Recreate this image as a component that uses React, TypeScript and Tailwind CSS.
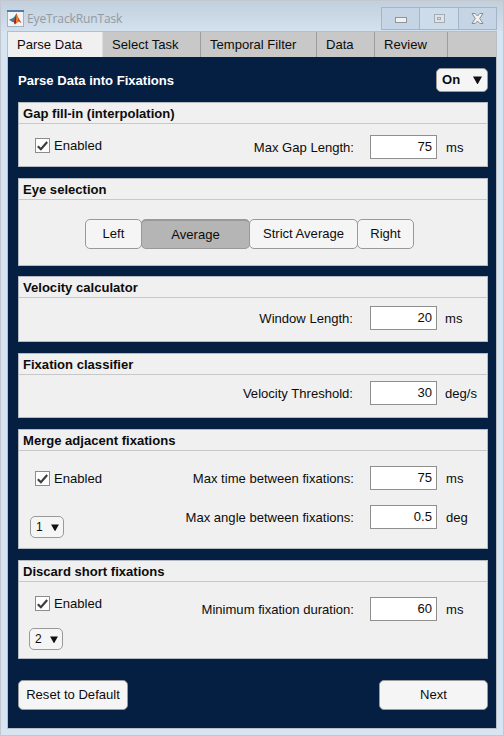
import type { ReactNode } from "react";

const Check = () => (
  <span className="flex h-[15px] w-[15px] shrink-0 items-center justify-center border border-[#8c8c8c] bg-white">
    <svg width="11" height="10" viewBox="0 0 11 10" fill="none">
      <path d="M0.8 5.2 L3.9 8.2 L10.2 1" stroke="#3c3c3c" strokeWidth="2.2" />
    </svg>
  </span>
);

const Arrow = ({ size = 9 }: { size?: number }) => (
  <svg width={size} height={size - 1} viewBox="0 0 9 8">
    <path d="M0 0.5H9L4.8 8H4.2Z" fill="#111" />
  </svg>
);

function Enabled({ top }: { top: string }) {
  return (
    <div className={`flex items-center gap-1 pl-[16px] ${top}`}>
      <Check />
      <span className="leading-[15px]">Enabled</span>
    </div>
  );
}

function Order({ value, place }: { value: string; place: string }) {
  return (
    <div
      className={`flex h-[22px] w-[34px] items-center justify-between rounded-[5px] border border-[#999] bg-[#f5f5f5] pr-1 pl-[5px] text-[12px] ${place}`}
    >
      {value}
      <Arrow size={8} />
    </div>
  );
}

function Field({ label, value, unit, near = false }: { label: string; value: string; unit: string; near?: boolean }) {
  return (
    <div className="flex h-6 items-center justify-end">
      <span className={near ? "mr-[17px] pt-[2px]" : "mr-4 pt-[2px]"}>{label}</span>
      <span className="flex h-6 w-[67px] items-center justify-end border border-[#8f8f8f] bg-white pr-1">{value}</span>
      <span className={near ? "w-[50px] pt-[2px] pl-[8px]" : "w-[50px] pt-[2px] pl-[9px]"}>{unit}</span>
    </div>
  );
}

function Panel({ title, size, children }: { title: string; size: string; children: ReactNode }) {
  return (
    <section className={`flex w-[470px] shrink-0 flex-col border border-[#b5bac1] bg-[#f0f0f0] ${size}`}>
      <h2 className="flex h-[21px] shrink-0 items-center border-b border-[#c8c8c8] pt-px pl-1 font-bold">{title}</h2>
      <div className="flex flex-1 justify-between">{children}</div>
    </section>
  );
}

function Tab({ name, look }: { name: string; look: string }) {
  return <div className={`flex h-full items-center border-r border-[#9d9d9d] ${look}`}>{name}</div>;
}

export default function App() {
  return (
    <div className="flex h-[736px] w-[504px] flex-col overflow-hidden border border-[#c3c8d0] bg-[#d7e4f2] font-['Liberation_Sans',Arial,sans-serif] text-[13.07px] leading-4 text-[#0c0c0c]">
      <header className="flex h-[30px] shrink-0 items-start justify-between bg-gradient-to-b from-[#c2cfdc] to-[#d3e0ed] pr-[6px] pl-[6px]">
        <div className="flex items-center gap-[3px] pt-[9px]">
          <svg width="17" height="17" viewBox="0 0 17 17">
            <rect x="0.5" y="0.5" width="16" height="16" fill="#f1f3f5" stroke="#9fb2c6" />
            <path d="M0 0H17V2H0Z" fill="#547ba8" />
            <path d="M2 9.8L6 8L8 6L9 4L7.6 10.5L5.4 12Z" fill="#337da6" />
            <path d="M5 12L7 10L9.3 3.3L11 7L14.5 13L11.5 11.5L8 14.5L6.5 12Z" fill="#d64d1c" />
            <path d="M9.3 3.3L10 8L8 14.5L7 12.5Z" fill="#812b25" />
            <path d="M9.5 4L10.8 8L10.5 11.5L9.2 13Z" fill="#f49b31" />
          </svg>
          <span className="font-['Open_Sans','Noto_Sans',sans-serif] text-[12px] leading-[17px] tracking-[-0.12px] text-[#929aa2]">
            EyeTrackRunTask
          </span>
        </div>
        <div className="mt-[6px] flex h-[23px] w-[116px] border border-[#a5b4c6] bg-[#c6d5e6]">
          <div className="flex w-[38px] items-center justify-center border-r border-[#a5b4c6]">
            <span className="mt-[3px] h-[6px] w-3 border border-[#8e949b] bg-[#f1f1ee]" />
          </div>
          <div className="flex w-[39px] items-center justify-center border-r border-[#a5b4c6] bg-[#cddceb]">
            <span className="flex h-[9px] w-[11px] items-center justify-center border border-[#a5abb3] bg-[#dfe3e7]">
              <span className="h-[3px] w-1 border border-[#9caab8]" />
            </span>
          </div>
          <div className="flex flex-1 items-center justify-center">
            <svg width="13" height="11" viewBox="0 0 13 11">
              <path d="M1 .5H4.2L6.5 3L8.8 .5H12L8.7 5.5L12 10.5H8.8L6.5 8L4.2 10.5H1L4.3 5.5Z" fill="#f2f1ee" stroke="#858c95" />
            </svg>
          </div>
        </div>
      </header>

      <div className="ml-[6px] flex h-[698px] w-[490px] shrink-0 flex-col border border-[#b9bec5] bg-[#051f43]">
        <nav className="flex h-[25px] shrink-0 bg-[#c8c8c8]">
          <Tab name="Parse Data" look="w-[95px] bg-[#f0f0f0] pl-[9px] border-r-[#dedede]" />
          <Tab name="Select Task" look="w-[98px] pl-[9px]" />
          <Tab name="Temporal Filter" look="w-[116px] pl-[9px]" />
          <Tab name="Data" look="w-[58px] pl-[9px]" />
          <Tab name="Review" look="w-[73px] pl-[9px]" />
        </nav>

        <main className="flex flex-1 flex-col pl-[10px]">
          <div className="flex h-[45px] w-[470px] shrink-0 items-center justify-between font-bold">
            <h1 className="pt-[2px] text-white">Parse Data into Fixations</h1>
            <div className="mt-[1px] flex h-6 w-[52px] items-center justify-between rounded-[5px] border border-[#9a9a9a] bg-[#f5f5f5] pr-[5px] pl-[5px]">
              On
              <Arrow />
            </div>
          </div>

          <Panel title="Gap fill-in (interpolation)" size="h-[65px]">
            <Enabled top="h-[43px]" />
            <div className="pt-[11px]">
              <Field label="Max Gap Length:" value="75" unit="ms" />
            </div>
          </Panel>

          <Panel title="Eye selection" size="mt-[11px] h-[88px]">
            <div className="mt-[19px] flex h-[30px] pl-[66px]">
              <div className="flex w-[57px] items-center justify-center rounded-[5px] border border-[#999] bg-[#f5f5f5]">Left</div>
              <div className="-ml-px flex w-[109px] items-center justify-center rounded-[5px] border border-t-2 border-[#999] bg-[#b5b5b5]">Average</div>
              <div className="-ml-px flex w-[109px] items-center justify-center rounded-[5px] border border-[#999] bg-[#f5f5f5]">Strict Average</div>
              <div className="-ml-px flex w-[57px] items-center justify-center rounded-[5px] border border-[#999] bg-[#f5f5f5]">Right</div>
            </div>
          </Panel>

          <Panel title="Velocity calculator" size="mt-[10px] h-[66px]">
            <div className="flex-1 pt-[8px]">
              <Field label="Window Length:" value="20" unit="ms" near />
            </div>
          </Panel>

          <Panel title="Fixation classifier" size="mt-[11px] h-[65px]">
            <div className="flex-1 pt-[6px]">
              <Field label="Velocity Threshold:" value="30" unit="deg/s" near />
            </div>
          </Panel>

          <Panel title="Merge adjacent fixations" size="mt-[11px] h-[120px]">
            <div>
              <Enabled top="pt-[20px]" />
              <Order value="1" place="mt-[30px] ml-[11px]" />
            </div>
            <div className="flex flex-col gap-[15px] pt-[15px]">
              <Field label="Max time between fixations:" value="75" unit="ms" />
              <Field label="Max angle between fixations:" value="0.5" unit="deg" />
            </div>
          </Panel>

          <Panel title="Discard short fixations" size="mt-[11px] h-[99px]">
            <div>
              <Enabled top="pt-[14px]" />
              <Order value="2" place="mt-[17px] ml-[10px]" />
            </div>
            <div className="pt-[15px]">
              <Field label="Minimum fixation duration:" value="60" unit="ms" />
            </div>
          </Panel>

          <div className="mt-[21px] flex w-[470px] justify-between">
            <button className="h-[30px] w-[110px] rounded-[5px] border border-[#9a9a9a] bg-[#f5f5f5]">Reset to Default</button>
            <button className="h-[30px] w-[109px] rounded-[5px] border border-[#9a9a9a] bg-[#f5f5f5]">Next</button>
          </div>
        </main>
      </div>
    </div>
  );
}
